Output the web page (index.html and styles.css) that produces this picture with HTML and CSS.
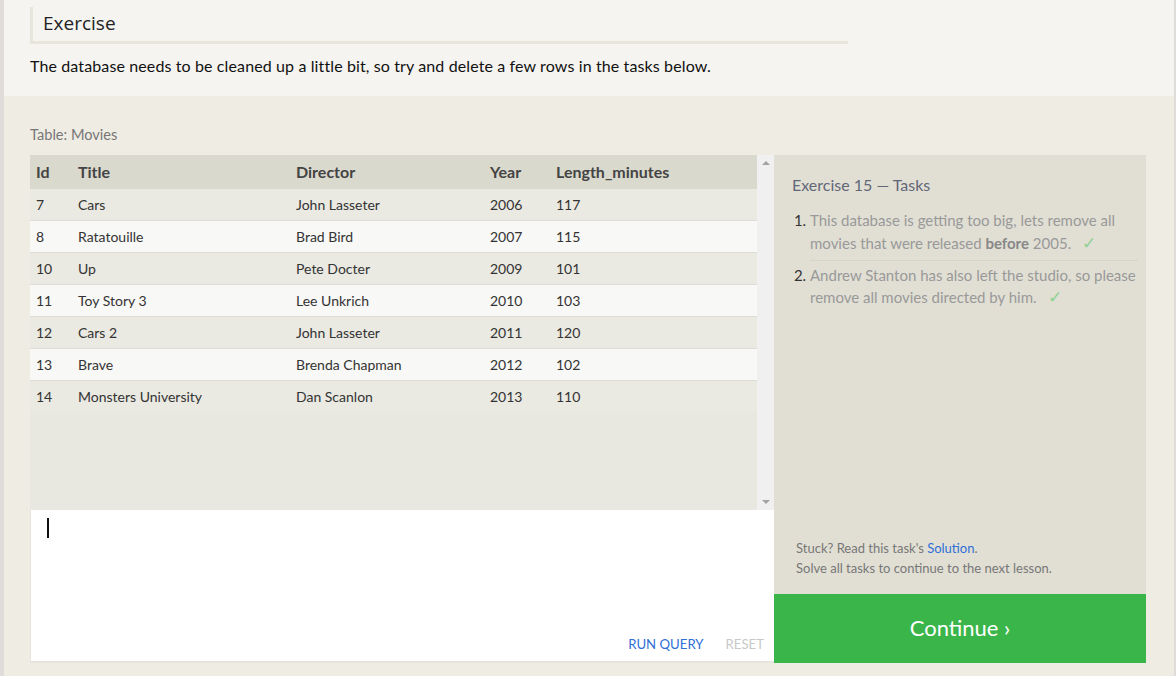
FILE: index.html
```html
<!DOCTYPE html>
<html>
<head>
<meta charset="utf-8">
<link rel="stylesheet" href="styles.css">
</head>
<body>
<div class="page">
  <section class="top">
    <h2 class="ex-title">Exercise</h2>
    <p class="ex-desc">The database needs to be cleaned up a little bit, so try and delete a few rows in the tasks below.</p>
  </section>
  <section class="lower">
    <div class="table-label">Table: Movies</div>
    <div class="workspace">
      <div class="left-col">
        <div class="table-area">
          <div class="table-wrap">
            <table class="movies">
              <colgroup>
                <col class="c-id"><col class="c-title"><col class="c-dir"><col class="c-year"><col class="c-len">
              </colgroup>
              <thead>
                <tr><th>Id</th><th>Title</th><th>Director</th><th>Year</th><th>Length_minutes</th></tr>
              </thead>
              <tbody>
                <tr><td>7</td><td>Cars</td><td>John Lasseter</td><td>2006</td><td>117</td></tr>
                <tr><td>8</td><td>Ratatouille</td><td>Brad Bird</td><td>2007</td><td>115</td></tr>
                <tr><td>10</td><td>Up</td><td>Pete Docter</td><td>2009</td><td>101</td></tr>
                <tr><td>11</td><td>Toy Story 3</td><td>Lee Unkrich</td><td>2010</td><td>103</td></tr>
                <tr><td>12</td><td>Cars 2</td><td>John Lasseter</td><td>2011</td><td>120</td></tr>
                <tr><td>13</td><td>Brave</td><td>Brenda Chapman</td><td>2012</td><td>102</td></tr>
                <tr><td>14</td><td>Monsters University</td><td>Dan Scanlon</td><td>2013</td><td>110</td></tr>
              </tbody>
            </table>
          </div>
          <div class="scrollbar">
            <span class="arrow up"></span>
            <span class="arrow down"></span>
          </div>
        </div>
        <div class="editor">
          <div class="editor-input"><span class="cursor"></span></div>
          <div class="editor-actions">
            <span class="btn run">RUN QUERY</span>
            <span class="btn reset">RESET</span>
          </div>
        </div>
      </div>
      <div class="right-col">
        <div class="tasks">
          <h3 class="tasks-title">Exercise 15 — Tasks</h3>
          <ol class="task-list">
            <li>This database is getting too big, lets remove all movies that were released <b>before</b> 2005.<span class="check">✓</span></li>
            <li>Andrew Stanton has also left the studio, so please remove all movies directed by him.<span class="check">✓</span></li>
          </ol>
          <div class="tasks-foot">
            <div>Stuck? Read this task's <a class="sol">Solution</a>.</div>
            <div>Solve all tasks to continue to the next lesson.</div>
          </div>
        </div>
        <div class="continue">Continue ›</div>
      </div>
    </div>
  </section>
</div>
</body>
</html>
```

FILE: styles.css
```css
html, body {
  margin: 0;
  padding: 0;
}
body {
  background: #e0dcd9;
  font-family: "Lato", "Liberation Sans", sans-serif;
  color: #222;
}
.page {
  margin: 0 2px 0 4px;
  height: 676px;
  display: flex;
  flex-direction: column;
  background: #efece4;
}
.top {
  background: #f5f4f0;
  padding: 7px 26px 0;
  height: 89px;
}
.ex-title {
  margin: 0;
  width: 805px;
  height: 34px;
  border-left: 3px solid #e8e6dc;
  border-bottom: 3px solid #e8e6dc;
  padding-left: 10px;
  font-weight: normal;
  font-size: 19px;
  line-height: 32px;
  color: #222;
  font-family: "Open Sans", sans-serif;
}
.ex-desc {
  margin: 12px 0 0;
  font-size: 16px;
  line-height: 20px;
  letter-spacing: 0.12px;
  color: #111;
}
.lower {
  flex: 1;
  background: #efece4;
  border-top-left-radius: 4px;
  padding: 29px 27px 0 26px;
}
.table-label {
  font-size: 14.6px;
  color: #777;
  line-height: 20px;
  height: 30px;
}
.workspace {
  display: flex;
}
.left-col {
  width: 744px;
  display: flex;
  flex-direction: column;
}
.table-area {
  height: 355px;
  display: flex;
  background: #e9e8e0;
}
.table-wrap {
  flex: 1;
}
.movies {
  width: 100%;
  border-collapse: collapse;
  font-size: 14px;
  color: #333;
}
.c-id { width: 42px; }
.c-title { width: 218px; }
.c-dir { width: 194px; }
.c-year { width: 66px; }
.movies th {
  background: #dad9cd;
  text-align: left;
  font-weight: bold;
  font-size: 16px;
  color: #444;
  height: 34px;
  box-sizing: border-box;
  padding: 0 0 2px 6px;
}
.movies td {
  height: 31px;
  padding: 0 0 0 6px;
  border-bottom: 1px solid #dedcd4;
}
.movies tbody tr:nth-child(odd) td { background: #eae9e2; }
.movies tbody tr:nth-child(even) td { background: #f8f8f6; }
.movies tbody tr:last-child td { border-bottom: none; }
.scrollbar {
  width: 17px;
  background: #f0f0f0;
  display: flex;
  flex-direction: column;
  justify-content: space-between;
  align-items: center;
  padding: 6px 0;
  box-sizing: border-box;
}
.arrow {
  width: 0;
  height: 0;
  border-left: 4px solid transparent;
  border-right: 4px solid transparent;
}
.arrow.up { border-bottom: 4px solid #a3a3a3; }
.arrow.down { border-top: 4px solid #a3a3a3; }
.editor {
  height: 151px;
  background: #fff;
  border-bottom: 2px solid #e6e4dc;
  border-left: 1px solid #e6e4dc;
  display: flex;
  flex-direction: column;
  justify-content: space-between;
}
.editor-input {
  padding: 8px 16px;
}
.cursor {
  display: block;
  width: 2px;
  height: 20px;
  background: #111;
}
.editor-actions {
  display: flex;
  justify-content: flex-end;
  gap: 22px;
  padding: 0 10px 9px 0;
  font-size: 13.2px;
}
.btn.run { color: #2f6fd6; }
.btn.reset { color: #c8c8c8; }
.right-col {
  width: 372px;
  display: flex;
  flex-direction: column;
}
.tasks {
  height: 439px;
  background: #e1dfd4;
  padding: 20px 8px 0 18px;
  box-sizing: border-box;
  display: flex;
  flex-direction: column;
}
.tasks-title {
  margin: 0;
  font-weight: normal;
  font-size: 16px;
  line-height: 20px;
  color: #626778;
}
.task-list {
  margin: 14px 0 0;
  padding: 0 0 0 18px;
  font-size: 15px;
  line-height: 23px;
  color: #999;
}
.task-list li::marker { color: #333; }
.task-list li + li {
  border-top: 1px solid #d6d4c9;
  margin-top: 5px;
  padding-top: 3px;
  line-height: 22px;
}
.task-list b { color: #888; }
.check {
  display: inline-block;
  color: #8fd192;
  font-size: 17px;
  line-height: 1;
  margin-left: 11px;
}
.tasks-foot {
  margin-top: auto;
  margin-bottom: 16px;
  font-size: 13px;
  line-height: 20px;
  color: #777;
  padding-left: 4px;
}
.sol { color: #2f6fd6; }
.continue {
  height: 69px;
  background: #39b54a;
  color: #fff;
  font-size: 22px;
  padding-bottom: 3px;
  box-sizing: border-box;
  display: flex;
  align-items: center;
  justify-content: center;
}
```
